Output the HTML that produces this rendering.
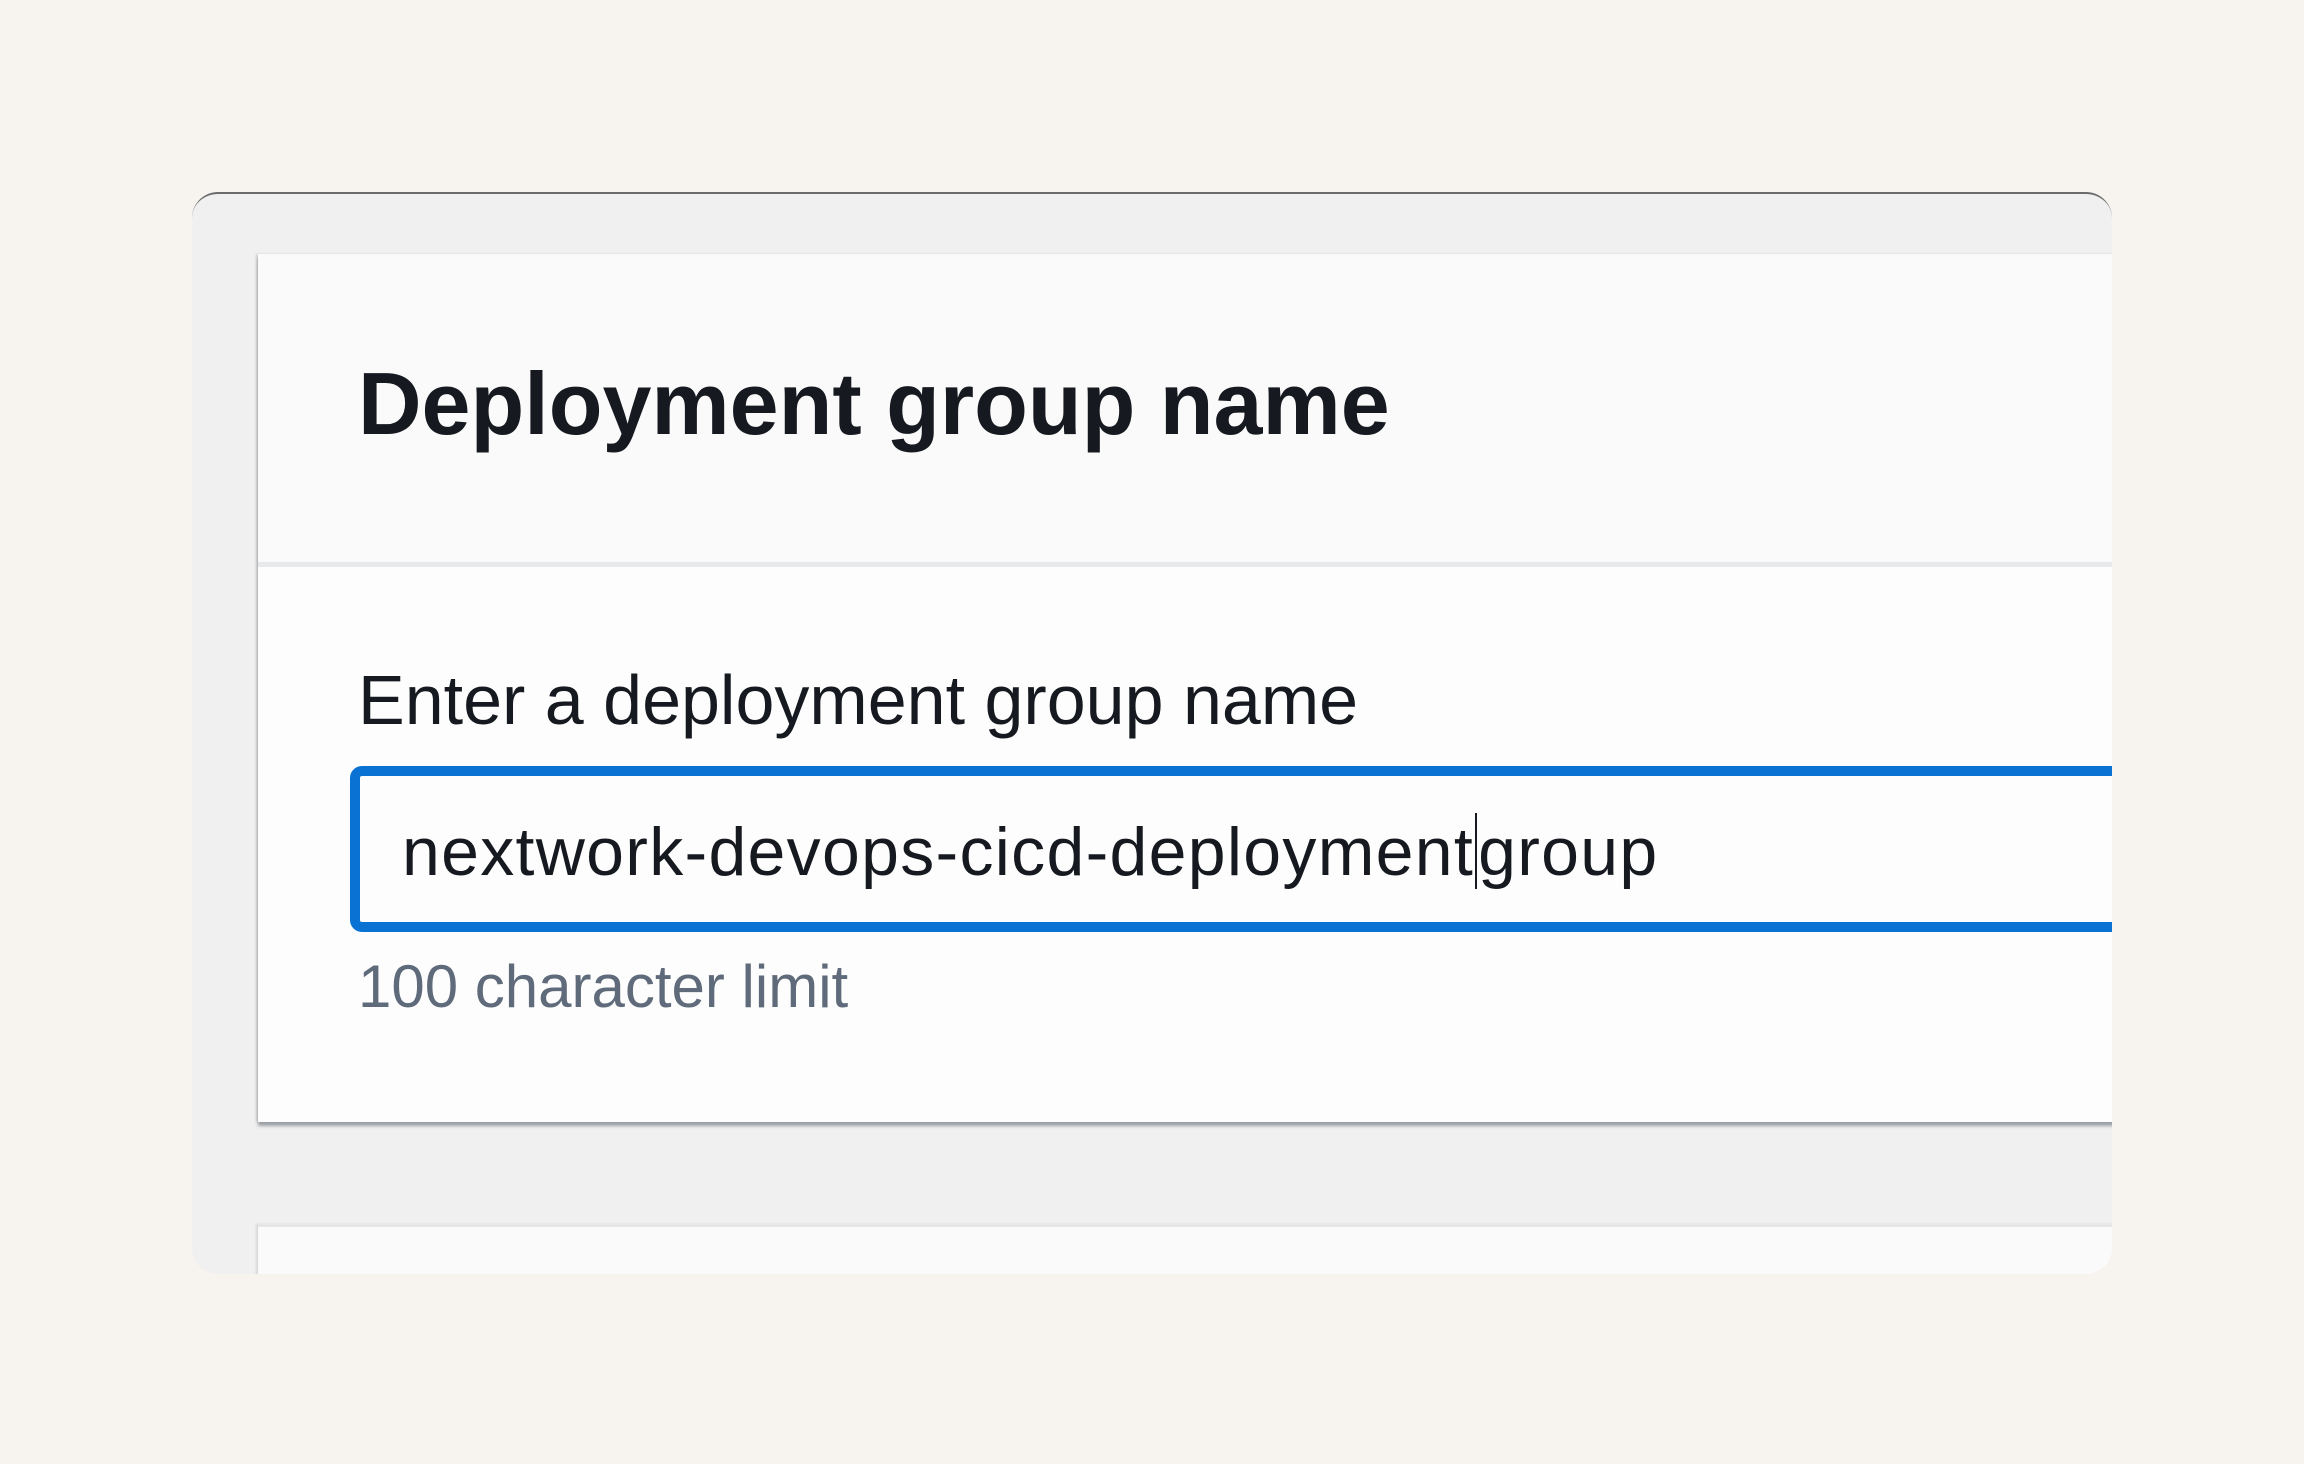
<!DOCTYPE html>
<html><head><meta charset="utf-8"><style>
html,body{margin:0;padding:0}
body{width:2304px;height:1464px;background:#f7f4ef;position:relative;overflow:hidden;font-family:"Liberation Sans",sans-serif}
.frame{position:absolute;left:192px;top:192px;width:1920px;height:1080px;background:#f0f0f0;border-radius:26px;overflow:hidden;border-top:2px solid #6b6b6b}
.card{position:absolute;left:66px;top:60px;width:1900px;height:868px;background:#fdfdfd;box-shadow:-2px 0 2px rgba(0,0,0,.12),0 4px 3px rgba(60,70,80,.45)}
.hdr{position:absolute;left:0;top:0;right:0;height:308px;background:#fafafa;border-bottom:5px solid #e8e9ea}
.t{position:absolute;white-space:nowrap;color:#16191f}
.card2{position:absolute;left:66px;top:1030px;width:1900px;height:100px;background:#fafafa;border-top:3px solid #e6e6e6;box-shadow:-2px 0 2px rgba(0,0,0,.1)}
.input{position:absolute;left:92px;top:512px;width:1900px;height:146px;border:10px solid #0972d3;border-radius:12px;background:#fdfdfd}
</style></head><body>
<div class="frame">
 <div class="card">
  <div class="hdr"></div>
  <div class="t" style="left:100px;top:100px;font-size:88px;font-weight:bold;line-height:100px">Deployment group name</div>
  <div class="t" style="left:100px;top:406px;font-size:70px;line-height:80px">Enter a deployment group name</div>
  <div class="input"></div>
  <div class="t" style="left:144px;top:558px;font-size:68px;line-height:80px;letter-spacing:1.3px">nextwork-devops-cicd-deployment<span style="display:inline-block;width:2px;height:76px;background:#16191f;vertical-align:-14px;margin:0 1px"></span>group</div>
  <div class="t" style="left:100px;top:698px;font-size:60px;line-height:70px;color:#5f6b7a">100 character limit</div>
 </div>
 <div class="card2"></div>
</div>
</body></html>
